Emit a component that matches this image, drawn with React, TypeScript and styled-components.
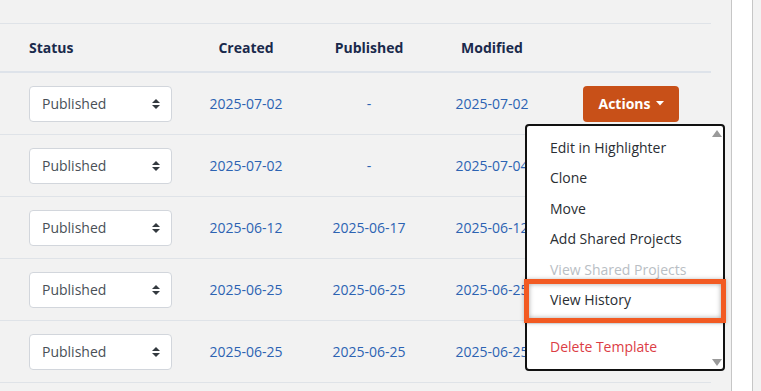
import React from 'react';
import styled, { createGlobalStyle } from 'styled-components';

const GlobalStyle = createGlobalStyle`
  html, body {
    margin: 0;
    padding: 0;
    background: #f2f2f2;
    font-family: 'Open Sans', 'Liberation Sans', sans-serif;
    font-size: 14px;
    color: #212529;
  }
  * { box-sizing: border-box; }
`;

const Page = styled.div`
  display: flex;
  height: 391px;
  overflow: hidden;
`;

const Content = styled.div`
  width: 731px;
  padding: 23px 20px 0 0;
`;

const ScrollTrack = styled.div`
  width: 22px;
  background: #fff;
  border-left: 1px solid #c6c6c6;
  border-right: 1px solid #c6c6c6;
`;

const Table = styled.div`
  position: relative;
  width: 711px;
`;

const Row = styled.div<{ $header?: boolean }>`
  display: grid;
  grid-template-columns: 185px 122px 124px 122px 158px;
  align-items: center;
  height: ${({ $header }) => ($header ? 50 : 62)}px;
  border-top: ${({ $header }) => ($header ? '1px solid #dfe3e8' : 'none')};
  border-bottom: ${({ $header }) => ($header ? '2px solid #dee3ea' : '1px solid #dfe3e8')};
`;

const HeadCell = styled.div<{ $left?: boolean }>`
  font-weight: 700;
  color: #1a2a4c;
  text-align: ${({ $left }) => ($left ? 'left' : 'center')};
  padding-left: ${({ $left }) => ($left ? 29 : 0)}px;
`;

const StatusCell = styled.div`
  padding-left: 29px;
`;

const Select = styled.div`
  width: 143px;
  height: 36px;
  background: #fff;
  border: 1px solid #d2d6dc;
  border-radius: 4px;
  display: flex;
  align-items: center;
  justify-content: space-between;
  padding: 0 11px 0 12px;
  color: #495057;
`;

const DateCell = styled.div`
  text-align: center;
  color: #2c63b2;
`;

const ActionCell = styled.div`
  display: flex;
  justify-content: center;
  padding-right: 2px;
`;

const ActionsButton = styled.div`
  width: 96px;
  height: 36px;
  background: #c85018;
  border-radius: 4px;
  color: #fff;
  font-weight: 700;
  display: flex;
  align-items: center;
  justify-content: center;
  gap: 5px;
`;

const Menu = styled.div`
  position: absolute;
  left: 525px;
  top: 101px;
  width: 200px;
  background: #fff;
  border: 2px solid #111;
  border-radius: 4px;
  padding: 7px 0 6px;
`;

const Item = styled.div<{ $tone?: 'disabled' | 'danger'; $marked?: boolean }>`
  position: relative;
  padding: 0 23px;
  line-height: 30.4px;
  white-space: nowrap;
  color: ${({ $tone }) => ($tone === 'disabled' ? '#b9bec4' : $tone === 'danger' ? '#dc3d45' : '#2a2e33')};

  ${({ $marked }) =>
    $marked &&
    `
    &::after {
      content: '';
      position: absolute;
      left: -3px;
      right: -3px;
      top: -6px;
      bottom: -8px;
      border: 5px solid #f25a22;
      box-shadow: inset 0 0 5px rgba(0, 0, 0, 0.35), 0 0 4px rgba(0, 0, 0, 0.25);
    }
  `}
`;

const Divider = styled.div`
  height: 1px;
  background: #e9ecef;
  margin: 8px 0;
`;

const ScrollArrow = styled.svg<{ $pos: 'top' | 'bottom' }>`
  position: absolute;
  right: 1px;
  ${({ $pos }) => ($pos === 'top' ? 'top: 4px;' : 'bottom: 3px;')}
`;

const UpDown = () => (
  <svg width="8" height="10" viewBox="0 0 8 10">
    <path d="M4 0 L8 4 H0 Z M0 6 H8 L4 10 Z" fill="#343a40" />
  </svg>
);

const Caret = () => (
  <svg width="8" height="5" viewBox="0 0 8 5">
    <path d="M0 0 H8 L4 4.5 Z" fill="#fff" />
  </svg>
);

const rows = [
  { created: '2025-07-02', published: '-', modified: '2025-07-02' },
  { created: '2025-07-02', published: '-', modified: '2025-07-04' },
  { created: '2025-06-12', published: '2025-06-17', modified: '2025-06-12' },
  { created: '2025-06-25', published: '2025-06-25', modified: '2025-06-25' },
  { created: '2025-06-25', published: '2025-06-25', modified: '2025-06-25' },
];

const App: React.FC = () => (
  <>
    <GlobalStyle />
    <Page>
      <Content>
        <Table>
          <Row $header>
            <HeadCell $left>Status</HeadCell>
            <HeadCell>Created</HeadCell>
            <HeadCell>Published</HeadCell>
            <HeadCell>Modified</HeadCell>
            <HeadCell />
          </Row>
          {rows.map((r, i) => (
            <Row key={i}>
              <StatusCell>
                <Select>
                  <span>Published</span>
                  <UpDown />
                </Select>
              </StatusCell>
              <DateCell>{r.created}</DateCell>
              <DateCell>{r.published}</DateCell>
              <DateCell>{r.modified}</DateCell>
              <ActionCell>
                {i === 0 && (
                  <ActionsButton>
                    Actions <Caret />
                  </ActionsButton>
                )}
              </ActionCell>
            </Row>
          ))}
          <Menu>
            <ScrollArrow $pos="top" width="10" height="7" viewBox="0 0 10 7">
              <path d="M5 0 L10 7 H0 Z" fill="#9a9a9a" />
            </ScrollArrow>
            <Item>Edit in Highlighter</Item>
            <Item>Clone</Item>
            <Item>Move</Item>
            <Item>Add Shared Projects</Item>
            <Item $tone="disabled">View Shared Projects</Item>
            <Item $marked>View History</Item>
            <Divider />
            <Item $tone="danger">Delete Template</Item>
            <ScrollArrow $pos="bottom" width="10" height="7" viewBox="0 0 10 7">
              <path d="M0 0 H10 L5 7 Z" fill="#9a9a9a" />
            </ScrollArrow>
          </Menu>
        </Table>
      </Content>
      <ScrollTrack />
    </Page>
  </>
);

export default App;
